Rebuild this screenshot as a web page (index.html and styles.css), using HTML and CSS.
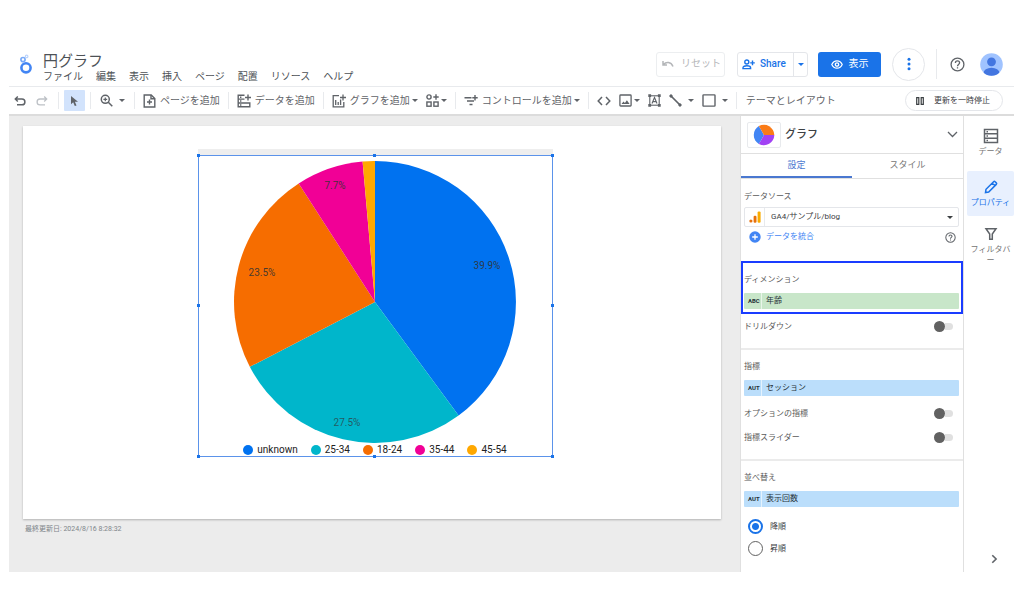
FILE: index.html
```html
<!DOCTYPE html>
<html lang="ja">
<head>
<meta charset="utf-8">
<meta name="viewport" content="width=device-width, initial-scale=1">
<title>円グラフ</title>
<link rel="stylesheet" href="styles.css">
</head>
<body>
<div class="app">
  <header class="header">
    <svg class="logo" width="14" height="20" viewBox="0 0 14 20" fill="none">
      <circle cx="7" cy="13.8" r="4.6" stroke="#4285f4" stroke-width="2.6"/>
      <circle cx="4" cy="5.6" r="2.1" stroke="#79aaf8" stroke-width="1.7"/>
      <circle cx="7.6" cy="2.4" r="1.3" stroke="#bcd4fb" stroke-width="1.2"/>
    </svg>
    <div class="heading">
      <h1 class="title">円グラフ</h1>
      <nav class="menu">
        <button>ファイル</button><button>編集</button><button>表示</button><button>挿入</button><button>ページ</button><button>配置</button><button>リソース</button><button>ヘルプ</button>
      </nav>
    </div>
    <button class="btn reset">
      <svg width="12" height="8" viewBox="0 0 12 8" fill="none" stroke="currentColor" stroke-width="1.5"><path d="M1 1v4h4M1.5 4.5C4 1.5 9 1.5 11 6.5"/></svg>
      リセット
    </button>
    <div class="split">
      <button class="share">
        <svg width="13" height="11" viewBox="0 0 13 11" fill="none" stroke="currentColor" stroke-width="1.4"><circle cx="4.8" cy="3" r="2"/><path d="M1 9.6V8.7C1 7.4 3 6.8 4.8 6.8S8.6 7.4 8.6 8.7v.9ZM10.5 1.6v4.6M8.2 3.9h4.6"/></svg>
        Share
      </button>
      <button class="share-more" aria-label="共有オプション"><i class="caret"></i></button>
    </div>
    <button class="btn view">
      <svg width="12" height="9" viewBox="0 0 12 9" fill="none" stroke="currentColor"><path stroke-width="1.2" d="M.8 4.5C1.8 2.2 3.7.8 6 .8s4.200 1.400 5.200 3.700C10.200 6.800 8.300 8.200 6 8.200S1.800 6.800.8 4.500Z"/><circle cx="6" cy="4.500" r="1.700" stroke-width="1.300"/></svg>
      表示
    </button>
    <button class="more" aria-label="その他">
      <svg width="4" height="14" viewBox="0 0 4 14" fill="currentColor"><circle cx="2" cy="2.300" r="1.500"/><circle cx="2" cy="7" r="1.500"/><circle cx="2" cy="11.700" r="1.500"/></svg>
    </button>
    <span class="header-rule"></span>
    <button class="icon-btn help" aria-label="ヘルプ">
      <svg width="15" height="15" viewBox="0 0 15 15" fill="none" stroke="currentColor" stroke-width="1.300"><circle cx="7.500" cy="7.500" r="6.400"/><path d="M5.400 6c0-2.800 4.200-2.600 4.200-.2 0 1.600-2.100 1.700-2.100 3.400M7.500 10.200v1.400"/></svg>
    </button>
    <button class="icon-btn" aria-label="アカウント">
      <svg width="23" height="23" viewBox="0 0 23 23"><defs><clipPath id="face"><circle cx="11.500" cy="11.500" r="11.300"/></clipPath></defs><g clip-path="url(#face)"><rect width="23" height="23" fill="#a0c3ff"/><circle cx="11.500" cy="8.800" r="4.400" fill="#4376e0"/><ellipse cx="11.500" cy="20" rx="8" ry="5.200" fill="#4376e0"/></g></svg>
    </button>
  </header>

  <div class="toolbar">
    <div class="group history">
      <button class="tool" aria-label="元に戻す"><svg width="12" height="12" viewBox="0 0 12 12" fill="none" stroke="currentColor" stroke-width="1.500"><path d="M3.800 1.500 1.300 4l2.500 2.500M1.500 4H8a2.900 2.900 0 0 1 0 5.800H3"/></svg></button>
      <button class="tool off" aria-label="やり直す"><svg width="12" height="12" viewBox="0 0 12 12" fill="none" stroke="currentColor" stroke-width="1.300"><path d="M8.200 1.500 10.700 4 8.200 6.500M10.500 4H4a2.900 2.900 0 0 0 0 5.800h5"/></svg></button>
    </div>
    <div class="group pick">
      <button class="tool selected" aria-label="選択"><svg width="9" height="12" viewBox="0 0 9 12" fill="currentColor"><path d="M1 1v8.300l2.200-2 1.600 3.800 1.700-.7L4.900 6.700H8Z"/></svg></button>
    </div>
    <div class="group zoom">
      <button class="tool loose" aria-label="ズーム"><svg width="13" height="13" viewBox="0 0 13 13" fill="none" stroke="currentColor" stroke-width="1.500"><circle cx="5.300" cy="5.300" r="4"/><path d="m8.300 8.300 4 4"/><path stroke-width="1.200" d="M5.300 3.400v3.800M3.400 5.300h3.800"/></svg><i class="caret"></i></button>
    </div>
    <div class="group">
      <button class="tool add"><svg width="13" height="14" viewBox="0 0 13 14" fill="none" stroke="currentColor" stroke-width="1.400"><path d="M1.200 1h7l3.600 3.600V13H1.200Z"/><path d="M8 1v3.800h3.800M6.500 5.500v5M4 8h5"/></svg>ページを追加</button>
    </div>
    <div class="group">
      <button class="tool add"><svg width="14" height="14" viewBox="0 0 14 14" fill="none" stroke="currentColor" stroke-width="1.400"><path d="M7.500 1.200H1.200v11.600h11.600V9H1.200M1.200 5.100h6.300M12.800 12.800V8.300M11 .5v6M8 3.500h6M3 3.200h1.400M3 7h1.400M3 11h1.400"/></svg>データを追加</button>
    </div>
    <div class="group">
      <button class="tool add"><svg width="14" height="14" viewBox="0 0 14 14" fill="none" stroke="currentColor" stroke-width="1.300"><path d="M7 1.700H1.200v11.100h10.600V8M11 .5v6M8 3.500h6"/><path d="M3.700 6v5M6.200 8v3M8.600 5.500V11" /></svg>グラフを追加<i class="caret"></i></button>
      <button class="tool" aria-label="コミュニティ ビジュアリゼーション"><svg width="13" height="13" viewBox="0 0 13 13" fill="none" stroke="currentColor" stroke-width="1.400"><circle cx="3" cy="3" r="2.100"/><path d="M10 .3v5.400M7.300 3h5.400"/><rect x=".9" y="8" width="4.200" height="4.200"/><rect x="7.900" y="8" width="4.200" height="4.200"/></svg><i class="caret"></i></button>
    </div>
    <div class="group">
      <button class="tool add"><svg width="14" height="12" viewBox="0 0 14 12" fill="none" stroke="currentColor" stroke-width="1.400"><path d="M.5 2.700h7M3 6h7M5.500 9.500h3M11 0v5.400M8.300 2.700h5.400"/></svg>コントロールを追加<i class="caret"></i></button>
    </div>
    <div class="group">
      <button class="tool" aria-label="URL を埋め込む"><svg width="14" height="10" viewBox="0 0 14 10" fill="none" stroke="currentColor" stroke-width="1.500"><path d="M5 1 1.200 5 5 9M9 1l3.800 4L9 9"/></svg></button>
      <button class="tool" aria-label="画像"><svg width="13" height="13" viewBox="0 0 13 13" fill="none" stroke="currentColor" stroke-width="1.300"><rect x=".9" y="1" width="11.200" height="11" rx=".8"/><path fill="currentColor" stroke="none" d="m2.500 10 2-2.600 1.400 1.500 2-2.600L10.600 10Z"/></svg><i class="caret"></i></button>
      <button class="tool" aria-label="テキスト"><svg width="13" height="13" viewBox="0 0 13 13" fill="none" stroke="currentColor"><rect x="1.800" y="1.800" width="9.400" height="9.400" stroke-width="1.100"/><path fill="currentColor" stroke="none" d="M.3.300h2.800v2.800H.3ZM9.900.300h2.800v2.800H9.900ZM.3 9.900h2.800v2.800H.3ZM9.900 9.900h2.800v2.800H9.900Z"/><path stroke-width="1.100" d="m4 9.500 2.500-6 2.500 6M4.900 7.600h3.200"/></svg></button>
      <button class="tool loose" aria-label="線"><svg width="13" height="13" viewBox="0 0 13 13" fill="currentColor" stroke="currentColor"><path stroke-width="1.700" d="m2 2 9 9"/><circle cx="2" cy="2" r="1.200"/><circle cx="11" cy="11" r="1.200"/></svg><i class="caret"></i></button>
      <button class="tool loose" aria-label="図形"><svg width="14" height="13" viewBox="0 0 14 13" fill="none" stroke="currentColor" stroke-width="1.400"><rect x="1" y=".9" width="12" height="11.200" rx=".6"/></svg><i class="caret"></i></button>
    </div>
    <button class="tool theme">テーマとレイアウト</button>
    <button class="pause"><svg width="8" height="8" viewBox="0 0 8 8" fill="none" stroke="currentColor" stroke-width="1.200"><path d="M.7.7h2.100v6.600H.7ZM5.200.7h2.100v6.600H5.200Z"/></svg>更新を一時停止</button>
  </div>

  <div class="workspace">
    <main class="canvas">
      <div class="report">
        <section class="chart">
          <div class="chart-head"></div>
          <div class="selection">
            <svg class="pie" width="282" height="282" viewBox="-141 -141 282 282" role="img" aria-label="年齢別セッション">
              <path fill="#0072f0" d="M0 0V-141A141 141 0 0 1 83.600 113.500Z"/>
              <path fill="#00b6cb" d="M0 0 83.600 113.500A141 141 0 0 1-125.200 64.800Z"/>
              <path fill="#f66d00" d="M0 0-125.200 64.800A141 141 0 0 1-76.300-118.600Z"/>
              <path fill="#f10096" d="M0 0-76.300-118.600A141 141 0 0 1-12.400-140.500Z"/>
              <path fill="#ffa800" d="M0 0-12.400-140.500A141 141 0 0 1 0-141Z"/>
              <g class="pie-label">
                <text x="112" y="-33">39.9%</text>
                <text x="-28" y="124" class="soft">27.5%</text>
                <text x="-113" y="-26">23.5%</text>
                <text x="-40" y="-113">7.7%</text>
              </g>
            </svg>
            <ul class="legend">
              <li class="c1">unknown</li><li class="c2">25-34</li><li class="c3">18-24</li><li class="c4">35-44</li><li class="c5">45-54</li>
            </ul>
            <i class="grip t l"></i><i class="grip t c"></i><i class="grip t r"></i>
            <i class="grip m l"></i><i class="grip m r"></i>
            <i class="grip b l"></i><i class="grip b c"></i><i class="grip b r"></i>
          </div>
        </section>
      </div>
      <p class="updated">最終更新日: 2024/8/16 8:28:32</p>
    </main>

    <aside class="panel">
      <div class="panel-head">
        <span class="thumb"><svg width="22" height="22" viewBox="-11 -11 22 22"><path fill="#4285f4" d="M0 0-5.100 8.900A10.300 10.300 0 0 1-5.100-8.900Z"/><path fill="#fa7b17" d="M0 0-5.100-8.900A10.300 10.300 0 0 1 10.300 0Z"/><path fill="#a142f4" d="M0 0H10.300A10.300 10.300 0 0 1-5.100 8.900Z"/></svg></span>
        <h2 class="panel-title">グラフ</h2>
        <button class="icon-btn" aria-label="グラフの種類"><svg width="11" height="7" viewBox="0 0 11 7" fill="none" stroke="currentColor" stroke-width="1.300"><path d="m1 1 4.500 4.500L10 1"/></svg></button>
      </div>
      <div class="tabs" role="tablist">
        <button class="tab on" role="tab" aria-selected="true">設定</button>
        <button class="tab" role="tab" aria-selected="false">スタイル</button>
      </div>
      <section class="block source">
        <label class="label" for="source">データソース</label>
        <div class="picker">
          <span class="picker-icon"><svg width="12" height="12" viewBox="0 0 12 12"><circle cx="1.900" cy="10" r="1.600" fill="#e8710a"/><rect x="4.600" y="4.800" width="2.900" height="6.900" rx="1.200" fill="#e8710a"/><rect x="8.600" y=".4" width="3" height="11.300" rx="1.200" fill="#f9ab00"/></svg></span>
          <select id="source"><option>GA4/サンプル/blog</option></select>
          <i class="caret"></i>
        </div>
        <div class="row blend">
          <button class="blend-btn"><svg width="12" height="12" viewBox="0 0 12 12"><circle cx="6" cy="6" r="5.700" fill="#4285f4"/><path stroke="#fff" stroke-width="1.300" d="M6 3.200v5.600M3.200 6h5.600"/></svg>データを統合</button>
          <button class="icon-btn" aria-label="ヘルプ"><svg width="11" height="11" viewBox="0 0 15 15" fill="none" stroke="currentColor" stroke-width="1.400"><circle cx="7.500" cy="7.500" r="6.400"/><path d="M5.400 6c0-2.800 4.200-2.600 4.200-.2 0 1.600-2.100 1.700-2.100 3.400M7.500 10.200v1.400"/></svg></button>
        </div>
      </section>
      <section class="focus">
        <h3 class="label">ディメンション</h3>
        <button class="chip green"><b>ABC</b><span>年齢</span></button>
      </section>
      <section class="block drill">
        <div class="row"><label class="label" for="drill">ドリルダウン</label><input class="switch" type="checkbox" role="switch" id="drill"></div>
      </section>
      <section class="block metric">
        <h3 class="label">指標</h3>
        <button class="chip"><b>AUT</b><span>セッション</span></button>
        <div class="row"><label class="label" for="optional">オプションの指標</label><input class="switch" type="checkbox" role="switch" id="optional"></div>
        <div class="row"><label class="label" for="slider">指標スライダー</label><input class="switch" type="checkbox" role="switch" id="slider"></div>
      </section>
      <section class="block sort">
        <h3 class="label">並べ替え</h3>
        <button class="chip"><b>AUT</b><span>表示回数</span></button>
        <div class="orders">
          <label class="order"><input type="radio" name="order" checked><span>降順</span></label>
          <label class="order"><input type="radio" name="order"><span>昇順</span></label>
        </div>
      </section>
    </aside>

    <nav class="rail">
      <button class="rail-item"><svg width="16" height="16" viewBox="0 0 16 16" fill="none" stroke="currentColor" stroke-width="1.500"><path d="M1.500 1.500h13v13h-13ZM1.500 5.800h13M1.500 10.200h13"/><path d="M3.500 3.700h1.500M3.500 8h1.500M3.500 12.400h1.500"/></svg>データ</button>
      <button class="rail-item on"><svg width="16" height="16" viewBox="0 0 16 16" fill="none" stroke="currentColor" stroke-width="1.500"><path d="M2.500 13.500 3 10.300l7.600-7.600c.5-.5 1-.5 1.500 0l1.200 1.200c.5.500.5 1 0 1.500L5.700 13ZM9.300 4 12 6.700"/></svg>プロパティ</button>
      <button class="rail-item"><svg width="16" height="16" viewBox="0 0 16 16" fill="none" stroke="currentColor" stroke-width="1.500"><path d="M3 2.700h10L9.300 8v5.300H6.700V8Z"/></svg>フィルタバー</button>
      <button class="icon-btn collapse" aria-label="閉じる"><svg width="7" height="10" viewBox="0 0 7 10" fill="none" stroke="currentColor" stroke-width="1.600"><path d="m1.300 1.200 3.800 3.800-3.800 3.800"/></svg></button>
    </nav>
  </div>
</div>
</body>
</html>
```
FILE: styles.css
```css
* { box-sizing: border-box; }

body {
  margin: 0;
  padding: 42px 10px 42px 9px;
  min-height: 100vh;
  display: flex;
  background: #fff;
  color: #5f6368;
  font-family: Roboto, "Noto Sans CJK JP", sans-serif;
  font-size: 10px;
  line-height: 14px;
}

h1, h2, h3, p, ul { margin: 0; padding: 0; font-weight: 400; }

button, input, select { font: inherit; color: inherit; margin: 0; }
button { display: flex; align-items: center; padding: 0; border: 0; background: none; white-space: nowrap; cursor: pointer; }
svg { display: block; flex: none; }

.app { flex: 1; min-width: 0; display: flex; flex-direction: column; }

.caret {
  flex: none;
  border: 3px solid transparent;
  border-top-color: currentColor;
  border-bottom: 0;
}
.icon-btn { flex: none; }

/* Header */
.header {
  height: 45px;
  display: flex;
  align-items: center;
  padding: 0 11px 0 10px;
  border-bottom: 1px solid #e8eaed;
}
.logo { margin-right: 10px; }
.heading { margin-right: auto; padding-top: 8px; }
.title { font-size: 15px; line-height: 18px; color: #4d5156; }
.menu { display: flex; gap: 13px; color: #4d5156; }

.btn { height: 25px; border-radius: 3px; }
.reset { width: 69px; gap: 7px; padding-left: 5px; margin-right: 12px; border: 1px solid #eceef0; color: #b4b6b9; }
.split { display: flex; height: 25px; margin-right: 10px; border: 1px solid #e4e6ea; border-radius: 3px; color: #1a73e8; }
.share { width: 55px; gap: 5px; padding-left: 4px; font-weight: 500; }
.share-more { width: 14px; justify-content: center; border-left: 1px solid #e4e6ea; }
.view { width: 63px; gap: 6px; justify-content: center; margin-right: 11px; background: #1a73e8; color: #fff; }
.more { width: 33px; height: 33px; justify-content: center; border: 1px solid #e4e6ea; border-radius: 50%; color: #1a73e8; }
.header-rule { width: 1px; height: 30px; margin: 0 13px 0 11px; background: #e8eaed; }
.help { margin-right: 15px; }

/* Toolbar */
.toolbar {
  height: 29px;
  display: flex;
  align-items: center;
  border-bottom: 2px solid #dcdcdc;
}
.group { display: flex; align-items: center; gap: 8px; height: 17px; padding: 0 8px; border-right: 1px solid #e8eaed; }
.history { gap: 10px; padding: 0 10px 0 5px; }
.pick { padding: 0 5px; }
.zoom { padding: 0 9px; }
.tool { gap: 2px; }
.tool.add { gap: 4px; color: #5f6368; }
.tool.add .caret { margin-left: -2px; }
.tool.loose { gap: 6px; }
.tool.off { color: #bdc1c6; }
.tool.selected { width: 21px; height: 21px; justify-content: center; background: #d2e3fc; border-radius: 1px; }
.theme { margin: 0 auto 0 9px; }
.pause { height: 21px; gap: 10px; padding: 0 12px 0 10px; margin-right: 11px; border: 1px solid #e4e6ea; border-radius: 11px; font-size: 8px; color: #3c4043; }

/* Workspace */
.workspace { flex: 1; display: grid; grid-template-columns: minmax(0, 1fr) 224px 50px; }

.canvas { padding: 10px 19px 0 14px; background: #ececec; }
.report { position: relative; aspect-ratio: 698 / 393; background: #fff; box-shadow: 0 1px 2px rgba(0, 0, 0, .25); }
.updated { margin: 3px 2px; font-size: 7px; color: #80868b; }

.chart { position: absolute; left: 25%; top: 23px; width: 355px; }
.chart-head { height: 6px; background: #eee; }
.selection {
  position: relative;
  height: 302px;
  padding-top: 5px;
  border: 1px solid #5b93ea;
}
.pie { margin: 0 auto; }
.pie-label { font-size: 10px; text-anchor: middle; fill: #333; fill-opacity: .9; }
.pie-label .soft { fill-opacity: .7; }

.legend { display: flex; justify-content: center; gap: 13px; list-style: none; color: #212121; }
.legend li { display: flex; align-items: center; gap: 4px; }
.legend li::before { content: ""; width: 10px; height: 10px; border-radius: 50%; background: currentColor; }
.c1::before { color: #0072f0; }
.c2::before { color: #00b6cb; }
.c3::before { color: #f66d00; }
.c4::before { color: #f10096; }
.c5::before { color: #ffa800; }

.grip { position: absolute; width: 3px; height: 3px; background: #1a73e8; }
.grip.t { top: -2px; }
.grip.m { top: calc(50% - 2px); }
.grip.b { bottom: -2px; }
.grip.l { left: -2px; }
.grip.c { left: calc(50% - 2px); }
.grip.r { right: -2px; }

/* Properties panel */
.panel { border: solid #e0e0e0; border-width: 0 1px; font-size: 8px; background: #fff; }
.panel-head { display: flex; align-items: center; height: 38px; padding: 0 5px 0 6px; border-bottom: 1px solid #e0e0e0; }
.thumb { width: 34px; height: 26px; display: grid; place-items: center; border: 1px solid #e8eaed; border-radius: 2px; }
.panel-title { margin: 0 auto 0 4px; font-size: 11px; font-weight: 500; color: #3c4043; }

.tabs { display: grid; grid-template-columns: 1fr 1fr; height: 25px; border-bottom: 1px solid #e0e0e0; }
.tab { justify-content: center; border-bottom: 2px solid transparent; font-size: 9px; color: #757575; }
.tab.on { color: #4a78d0; border-color: #4a78d0; }

.block { padding: 9px 4px 0 3px; }
.label { display: block; padding-top: 2px; font-size: 8px; line-height: 12px; color: #5a5a5a; }
.row { display: flex; align-items: center; justify-content: space-between; height: 14px; }

.source { padding-bottom: 17px; padding-top: 10px; }
.picker { display: flex; align-items: center; height: 20px; margin-top: 4px; padding-right: 5px; border: 1px solid #e4e6ea; border-radius: 2px; color: #3c4043; }
.picker-icon { width: 20px; height: 18px; display: grid; place-items: center; border-right: 1px solid #e8eaed; }
.picker select { flex: 1; min-width: 0; height: 18px; padding: 0 0 0 6px; border: 0; background: none; appearance: none; }
.blend { margin-top: 3px; padding: 0 3px 0 5px; }
.blend-btn { gap: 5px; color: #4285f4; }

.focus { padding: 9px 2px 3px 1px; border: 2px solid #1a3cff; }
.chip { width: 100%; height: 16px; margin-top: 7px; border-radius: 1px; background: #bbdefb; color: #263238; }
.chip.green { background: #c8e6c9; }
.chip b { width: 18px; height: 16px; padding-left: 4px; border-right: 1px solid rgba(255, 255, 255, .6); font-size: 6px; line-height: 16px; text-align: left; }
.chip span { padding-left: 4px; }

.drill { padding-top: 5px; padding-bottom: 15px; border-bottom: 2px solid #ebebeb; }
.metric { padding-bottom: 15px; border-bottom: 2px solid #ebebeb; }
.metric .row { margin-top: 10px; }

.switch {
  appearance: none;
  display: flex;
  align-items: center;
  width: 19px;
  height: 11px;
  margin-right: 6px;
}
.switch::before { content: ""; flex: none; width: 11px; height: 11px; border-radius: 50%; background: #616161; }
.switch::after { content: ""; flex: 1; height: 7px; border-radius: 0 4px 4px 0; background: #e0e0e0; }

.orders { display: grid; gap: 6px; padding: 11px 4px 0; }
.order { display: flex; align-items: center; gap: 7px; height: 16px; color: #3c4043; }
.order span { padding-top: 2px; }
.order input { appearance: none; width: 15px; height: 15px; border: 1px solid #616161; border-radius: 50%; }
.order input:checked { border: 2px solid #1a73e8; background: radial-gradient(circle, #1a73e8 3px, transparent 4px); }

/* Side rail */
.rail { display: flex; flex-direction: column; gap: 2px; padding: 4px 0 8px 3px; font-size: 8px; }
.rail-item { flex-direction: column; min-height: 45px; gap: 2px; padding: 8px 3px 0; line-height: 11px; white-space: normal; line-break: anywhere; color: #757575; }
.rail-item svg { color: #5f6368; }
.rail-item.on { margin-top: 4px; background: #e8f0fe; color: #1a73e8; border-radius: 2px; }
.rail-item.on svg { color: #1a73e8; }
.collapse { margin: auto auto 0 24px; }
```
